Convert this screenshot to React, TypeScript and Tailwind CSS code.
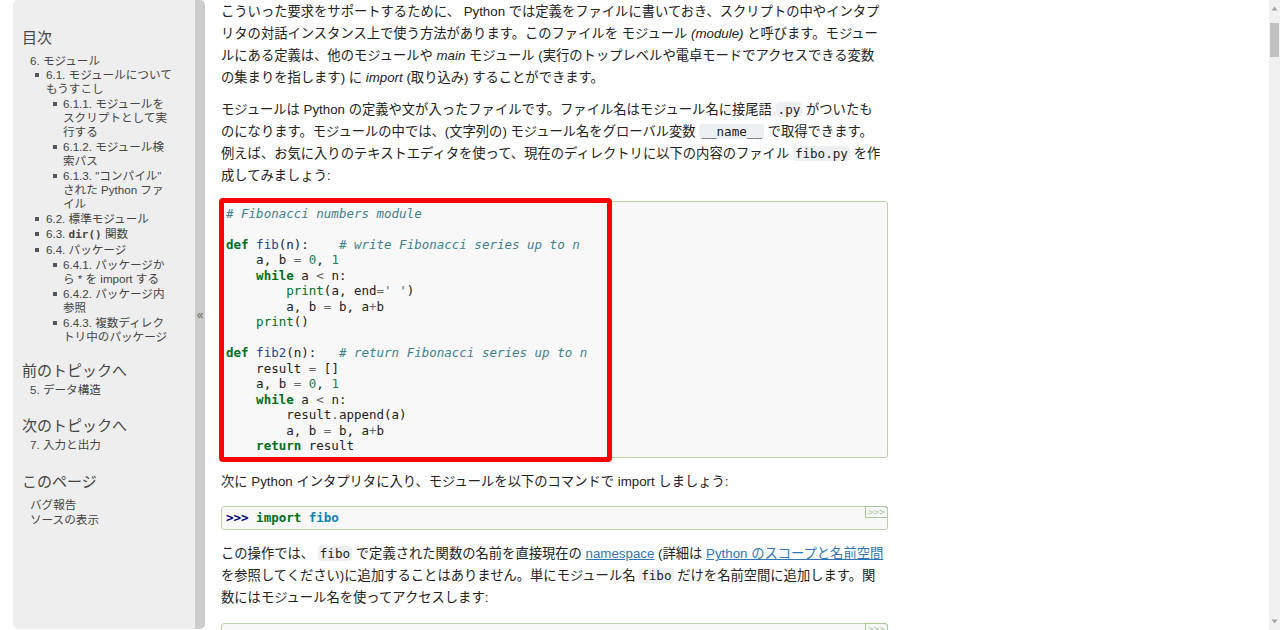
import React from 'react';

const sans = "font-['Liberation_Sans','Noto_Sans_CJK_JP',sans-serif]";
const mono = "font-['DejaVu_Sans_Mono',monospace]";

type Tok = [string, string?];

const C = 'italic text-[#408090]';
const K = 'font-bold text-[#007020]';
const NF = 'text-[#1a4596]';
const MI = 'text-[#208050]';
const NB = 'text-[#007020]';
const S = 'text-[#4070a0]';
const O = 'text-[#666666]';

const codeLines: Tok[][] = [
  [['# Fibonacci numbers module', C]],
  [],
  [['def', K], [' '], ['fib', NF], ['(n):    '], ['# write Fibonacci series up to n', C]],
  [['    a, b '], ['=', O], [' '], ['0', MI], [', '], ['1', MI]],
  [['    '], ['while', K], [' a '], ['<', O], [' n:']],
  [['        '], ['print', NB], ['(a, end'], ['=', O], ["' '", S], [')']],
  [['        a, b '], ['=', O], [' b, a'], ['+', O], ['b']],
  [['    '], ['print', NB], ['()']],
  [],
  [['def', K], [' '], ['fib2', NF], ['(n):   '], ['# return Fibonacci series up to n', C]],
  [['    result '], ['=', O], [' []']],
  [['    a, b '], ['=', O], [' '], ['0', MI], [', '], ['1', MI]],
  [['    '], ['while', K], [' a '], ['<', O], [' n:']],
  [['        result'], ['.', O], ['append(a)']],
  [['        a, b '], ['=', O], [' b, a'], ['+', O], ['b']],
  [['    '], ['return', K], [' result']],
];

function Lit({ children }: { children: React.ReactNode }) {
  return (
    <code className={`${mono} rounded-[3px] bg-[#ecf0f3] px-[2px] text-[12.6px] text-[#222]`}>{children}</code>
  );
}

function CopyBtn() {
  return (
    <span
      className={`${mono} absolute right-[-1px] top-[-1px] rounded-tr-[3px] border border-[#aacc99] px-[2px] text-[9.5px] leading-[10px] text-[#aacc99]`}
    >
      &gt;&gt;&gt;
    </span>
  );
}

function Bullet({ small }: { small?: boolean }) {
  return (
    <span
      className={
        small
          ? 'mr-[6px] mt-[5px] h-[4px] w-[4px] shrink-0 bg-[#555]'
          : 'mr-[7px] mt-[5px] h-[4px] w-[4px] shrink-0 bg-[#555]'
      }
    />
  );
}

function Item({ level, children }: { level: 2 | 3; children: React.ReactNode }) {
  return (
    <div className={level === 2 ? 'mt-px flex pl-[13px]' : 'mt-px flex pl-[31px]'}>
      <Bullet small={level === 3} />
      <span className="whitespace-nowrap">{children}</span>
    </div>
  );
}

function Sidebar() {
  return (
    <div className="ml-[13px] flex h-[629px] w-[192px] shrink-0 overflow-hidden rounded-[5px]">
      <div className="w-[182px] bg-[#eeeeee] pl-[9px] text-[#444]">
        <h3 className="mt-[28px] text-[15px] leading-[20px]">目次</h3>
        <div className="mt-[6px] text-[11.6px] leading-[14px]">
          <div className="pl-[8px]">6. モジュール</div>
          <div className="-mt-px">
            <Item level={2}>
              6.1. モジュールについて
              <br />
              もうすこし
            </Item>
            <Item level={3}>
              6.1.1. モジュールを
              <br />
              スクリプトとして実
              <br />
              行する
            </Item>
            <Item level={3}>
              6.1.2. モジュール検
              <br />
              索パス
            </Item>
            <Item level={3}>
              6.1.3. "コンパイル"
              <br />
              された Python ファ
              <br />
              イル
            </Item>
            <Item level={2}>6.2. 標準モジュール</Item>
            <Item level={2}>
              6.3. <span className={`${mono} font-bold text-[11px]`}>dir()</span> 関数
            </Item>
            <Item level={2}>6.4. パッケージ</Item>
            <Item level={3}>
              6.4.1. パッケージか
              <br />
              ら * を import する
            </Item>
            <Item level={3}>
              6.4.2. パッケージ内
              <br />
              参照
            </Item>
            <Item level={3}>
              6.4.3. 複数ディレク
              <br />
              トリ中のパッケージ
            </Item>
          </div>
        </div>

        <h3 className="mt-[17px] text-[15px] leading-[20px]">前のトピックへ</h3>
        <div className="mt-[2px] pl-[8px] text-[11.6px] leading-[14px]">5. データ構造</div>

        <h3 className="mt-[19px] text-[15px] leading-[20px]">次のトピックへ</h3>
        <div className="mt-[2px] pl-[8px] text-[11.6px] leading-[14px]">7. 入力と出力</div>

        <h3 className="mt-[20px] text-[15px] leading-[20px]">このページ</h3>
        <div className="mt-[6px] pl-[8px] text-[11.6px] leading-[14px]">
          <div>バグ報告</div>
          <div className="mt-px">ソースの表示</div>
        </div>
      </div>
      <div className="flex w-[10px] items-center justify-center bg-[#cccccc] text-[12px] text-[#666]">«</div>
    </div>
  );
}

function Main() {
  return (
    <div className="ml-[16px] w-[667px] shrink-0 pt-px text-[13.3px] leading-[22px] text-[#222]">
      <p className="whitespace-nowrap">
        こういった要求をサポートするために、 Python では定義をファイルに書いておき、スクリプトの中やインタプ
        <br />
        リタの対話インスタンス上で使う方法があります。このファイルを モジュール <i>(module)</i> と呼びます。モジュー
        <br />
        ルにある定義は、他のモジュールや <i>main</i> モジュール (実行のトップレベルや電卓モードでアクセスできる変数
        <br />
        の集まりを指します) に <i>import</i> (取り込み) することができます。
      </p>
      <p className="mt-[10px] whitespace-nowrap">
        モジュールは Python の定義や文が入ったファイルです。ファイル名はモジュール名に接尾語 <Lit>.py</Lit> がついたも
        <br />
        のになります。モジュールの中では、(文字列の) モジュール名をグローバル変数 <Lit>__name__</Lit> で取得できます。
        <br />
        例えば、お気に入りのテキストエディタを使って、現在のディレクトリに以下の内容のファイル <Lit>fibo.py</Lit> を作
        <br />
        成してみましょう:
      </p>

      <div className="relative mt-[14px] h-[257px] rounded-[3px] border border-[#b9d3a5] bg-[#f8f8f8] px-[4px] pt-[4px]">
        <pre className={`${mono} text-[12.5px] leading-[15.47px] text-[#222]`}>
          {codeLines.map((line, i) => (
            <div key={i} className="h-[15.47px] whitespace-pre">
              {line.map(([t, cls], j) => (
                <span key={j} className={cls}>
                  {t}
                </span>
              ))}
            </div>
          ))}
        </pre>
        <div className="absolute left-[-3px] top-[-4px] h-[264px] w-[393px] rounded-[4px] border-[5px] border-[#ff0000]" />
      </div>

      <p className="mt-[13px] whitespace-nowrap">次に Python インタプリタに入り、モジュールを以下のコマンドで import しましょう:</p>

      <div className="relative mt-[13px] h-[24px] rounded-[3px] border border-[#b9d3a5] bg-[#f8f8f8] px-[4px] pt-[3px]">
        <pre className={`${mono} text-[12.5px] leading-[16px] text-[#222]`}>
          <span className="font-bold text-[#000080]">&gt;&gt;&gt; </span>
          <span className={K}>import</span> <span className="font-bold text-[#0e84b5]">fibo</span>
        </pre>
        <CopyBtn />
      </div>

      <p className="mt-[13px] whitespace-nowrap">
        この操作では、 <Lit>fibo</Lit> で定義された関数の名前を直接現在の{' '}
        <a className="text-[#3077b5] underline">namespace</a> (詳細は{' '}
        <a className="text-[#3077b5] underline">Python のスコープと名前空間</a>
        <br />
        を参照してください)に追加することはありません。単にモジュール名 <Lit>fibo</Lit> だけを名前空間に追加します。関
        <br />
        数にはモジュール名を使ってアクセスします:
      </p>

      <div className="relative mt-[14px] h-[60px] rounded-[3px] border border-[#b9d3a5] bg-[#f8f8f8]">
        <CopyBtn />
      </div>
    </div>
  );
}

function Scrollbar() {
  return (
    <div className="ml-auto flex h-full w-[11px] shrink-0 flex-col bg-[#f1f1f1]">
      <div className="flex h-[17px] items-center justify-center">
        <svg width="7" height="5" viewBox="0 0 7 5">
          <path d="M3.5 0.5 L6.5 4.5 L0.5 4.5 Z" fill="#a3a3a3" />
        </svg>
      </div>
      <div className="mx-px mt-[6px] h-[34px] bg-[#c1c1c1]" />
      <div className="flex-1" />
      <div className="flex h-[17px] items-center justify-center">
        <svg width="7" height="5" viewBox="0 0 7 5">
          <path d="M0.5 0.5 L6.5 0.5 L3.5 4.5 Z" fill="#a3a3a3" />
        </svg>
      </div>
    </div>
  );
}

export default function App() {
  return (
    <div className={`${sans} flex h-[630px] w-[1280px] overflow-hidden bg-white`}>
      <Sidebar />
      <Main />
      <Scrollbar />
    </div>
  );
}
